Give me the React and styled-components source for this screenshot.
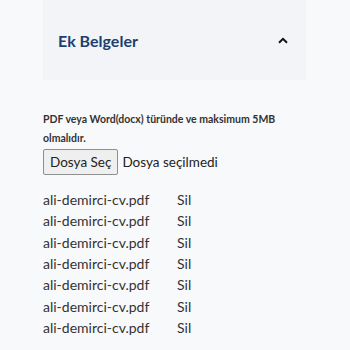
import React from "react";
import styled, { createGlobalStyle } from "styled-components";

const Global = createGlobalStyle`
  html, body { margin: 0; padding: 0; background: #f8f9fb; }
  body { font-family: "Lato", "Noto Sans", sans-serif; color: #333; }
`;

const Page = styled.div`
  width: 350px;
  height: 350px;
  overflow: hidden;
  box-sizing: border-box;
  padding: 0 44px 0 43px;
`;

const Header = styled.div`
  display: flex;
  align-items: center;
  justify-content: space-between;
  height: 80px;
  padding: 0 18px 0 15px;
  background: #f2f4f8;
  box-sizing: border-box;
`;

const Title = styled.h2`
  margin: 0;
  font-size: 16px;
  font-weight: 700;
  color: #1d3f70;
`;

const Body = styled.div`
  padding-top: 30px;
`;

const Note = styled.p`
  margin: 0;
  font-size: 10.5px;
  font-weight: 700;
  line-height: 19px;
  color: #333;
`;

const FileRow = styled.div`
  display: flex;
  align-items: center;
  gap: 4px;
  margin-top: 1px;
`;

const ChooseButton = styled.button`
  font-family: inherit;
  font-size: 13.5px;
  color: #222;
  height: 26px;
  padding: 0 6px;
  background: #efefef;
  border: 1px solid #8f8f8f;
  border-radius: 2px;
`;

const NoFile = styled.span`
  font-size: 13.5px;
  color: #222;
`;

const List = styled.ul`
  list-style: none;
  margin: 14px 0 0;
  padding: 0;
`;

const Item = styled.li`
  display: flex;
  align-items: center;
  height: 21.3px;
  font-size: 14px;
  color: #333;
`;

const Name = styled.span`
  width: 134px;
`;

const Remove = styled.span`
  color: #333;
`;

const Chevron = () => (
  <svg width="10" height="7" viewBox="0 0 10 7">
    <path d="M1 5.8 L5 1.8 L9 5.8" fill="none" stroke="#111" strokeWidth="2" />
  </svg>
);

export default function App() {
  const files = Array.from({ length: 7 }, () => "ali-demirci-cv.pdf");
  return (
    <>
      <Global />
      <Page>
        <Header>
          <Title>Ek Belgeler</Title>
          <Chevron />
        </Header>
        <Body>
          <Note>PDF veya Word(docx) türünde ve maksimum 5MB olmalıdır.</Note>
          <FileRow>
            <ChooseButton>Dosya Seç</ChooseButton>
            <NoFile>Dosya seçilmedi</NoFile>
          </FileRow>
          <List>
            {files.map((f, i) => (
              <Item key={i}>
                <Name>{f}</Name>
                <Remove>Sil</Remove>
              </Item>
            ))}
          </List>
        </Body>
      </Page>
    </>
  );
}
